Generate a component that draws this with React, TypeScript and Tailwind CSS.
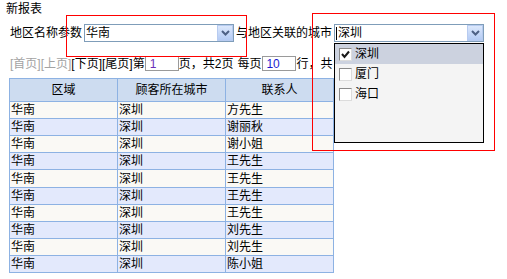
import React from 'react';

const ROWS = ['方先生', '谢丽秋', '谢小姐', '王先生', '王先生', '王先生', '王先生', '刘先生', '刘先生', '陈小姐'];

const CITIES = [
  { name: '深圳', checked: true },
  { name: '厦门', checked: false },
  { name: '海口', checked: false },
];

function SelectBox({ value, caret }: { value: string; caret?: boolean }) {
  return (
    <div className="relative flex h-[18px] w-[150px] items-center border border-[#7f9db9] bg-white">
      {caret && <span className="ml-px h-[13px] w-px bg-black" />}
      <span className="pl-px">{value}</span>
      {/* arrow button */}
      <div className="absolute top-0 right-0 flex h-[16px] w-[16px] items-center justify-center border border-[#b7cbf0] bg-gradient-to-b from-[#dce8fc] to-[#b4cbf4]">
        <svg width="9" height="6" viewBox="0 0 9 6">
          <path d="M1 1 L4.5 4.5 L8 1" fill="none" stroke="#4d6185" strokeWidth="2" />
        </svg>
      </div>
    </div>
  );
}

function Checkbox({ checked }: { checked: boolean }) {
  return (
    <div className="flex h-[13px] w-[13px] items-center justify-center border border-t-[#8a8a8a] border-l-[#8a8a8a] border-r-[#dcdcdc] border-b-[#dcdcdc] bg-white">
      {checked && (
        <svg width="9" height="9" viewBox="0 0 9 9">
          <path d="M1 4 L3.5 7 L8 1.5" fill="none" stroke="#1a1a1a" strokeWidth="2" />
        </svg>
      )}
    </div>
  );
}

export default function App() {
  return (
    <div
      className="relative h-[279px] w-[507px] overflow-hidden bg-white text-[12px] leading-[14px] text-black"
      style={{ fontFamily: '"Liberation Sans", "Noto Sans CJK SC", sans-serif' }}
    >
      <div className="pt-[2px] pl-[6px]">新报表</div>

      {/* parameter row */}
      <div className="mt-[8px] flex h-[18px] items-center pl-[10px]">
        <span className="w-[74px]">地区名称参数</span>
        <SelectBox value="华南" />
        <span className="ml-[2px] w-[98px]">与地区关联的城市</span>
        <SelectBox value="深圳" caret />
      </div>

      {/* pager */}
      <div className="mt-[14px] flex h-[15px] items-center pl-[10px]">
        <span className="text-[#a3a3a3]">[首页][上页]</span>
        <span>[下页][尾页]</span>
        <span>第</span>
        <div className="flex h-[15px] w-[34px] items-center border border-[#9a9a9a] pl-[4px] text-[#6a2fb8]">1</div>
        <span>页，共2页</span>
        <span className="ml-[4px]">每页</span>
        <div className="ml-px flex h-[15px] w-[34px] items-center border border-[#9a9a9a] pl-[3px] text-[#1a1ad0]">10</div>
        <span>行，共</span>
      </div>

      {/* data table */}
      <table className="mt-[7px] ml-[9px] border-collapse">
        <thead>
          <tr className="bg-[#cddcf0]">
            <th className="h-[23px] w-[108px] border border-[#8db2e3] p-0 text-center font-normal">区域</th>
            <th className="h-[23px] w-[108px] border border-[#8db2e3] p-0 text-center font-normal">顾客所在城市</th>
            <th className="h-[23px] w-[108px] border border-[#8db2e3] p-0 text-center font-normal">联系人</th>
          </tr>
        </thead>
        <tbody>
          {ROWS.map((name, i) => (
            <tr key={i} className={i % 2 === 0 ? 'bg-[#faf9f5]' : 'bg-[#e3e9fc]'}>
              <td className={`${i === 4 ? 'h-[18px]' : 'h-[17px]'} border border-[#8db2e3] p-0 pl-px`}>华南</td>
              <td className="border border-[#8db2e3] p-0 pl-px">深圳</td>
              <td className="border border-[#8db2e3] p-0 pl-px">{name}</td>
            </tr>
          ))}
        </tbody>
      </table>

      {/* open multi-select list */}
      <div className="absolute top-[43px] left-[334px] h-[100px] w-[150px] border border-black bg-[#f4f4f4]">
        {CITIES.map((c, i) => (
          <div
            key={c.name}
            className={`flex h-[20px] items-center gap-[3px] pl-[4px] ${i === 0 ? 'bg-[#ccd2df]' : ''}`}
          >
            <Checkbox checked={c.checked} />
            <span>{c.name}</span>
          </div>
        ))}
      </div>

      {/* red annotation boxes */}
      <div className="pointer-events-none absolute top-[15px] left-[66px] h-[42px] w-[181px] border border-[#ff0000]" />
      <div className="pointer-events-none absolute top-[13px] left-[312px] h-[138px] w-[183px] border border-[#ff0000]" />
    </div>
  );
}
